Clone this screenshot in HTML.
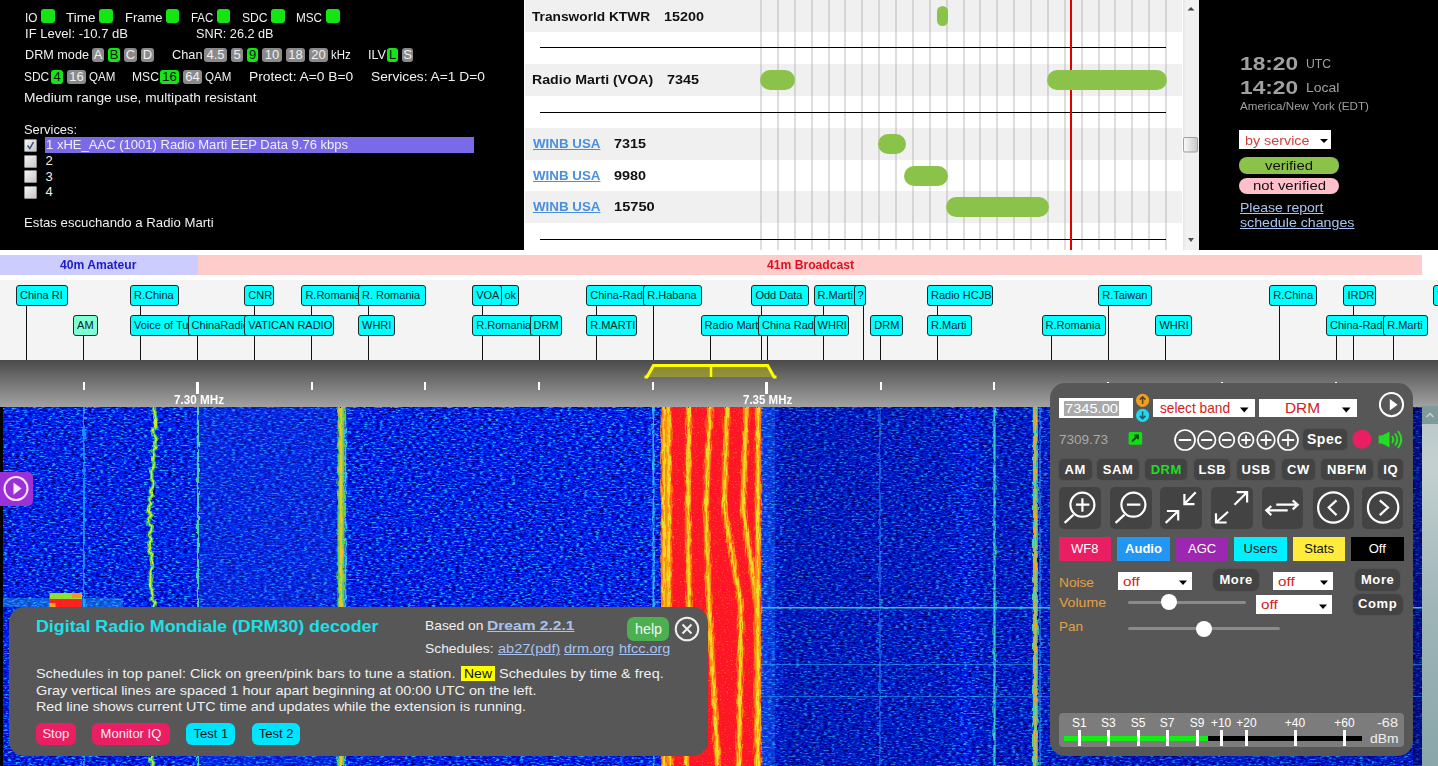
<!DOCTYPE html><html><head><meta charset="utf-8"><style>
*{margin:0;padding:0;box-sizing:border-box}
html,body{width:1438px;height:766px;overflow:hidden;background:#000;font-family:"Liberation Sans",sans-serif}
.t{position:absolute;white-space:nowrap;line-height:1;transform-origin:0 50%}
.r{position:absolute}
.bx{position:absolute;border-radius:3px;font-size:13px;line-height:14px;text-align:center;overflow:hidden}
.cb{position:absolute;width:13px;height:13px;background:linear-gradient(135deg,#f4f4f4,#c8c8c8);border:1px solid #8c8c8c;border-radius:1px}
.cb svg{position:absolute;left:-1px;top:-1px}
.lb{position:absolute;height:21px;border:1px solid #1a2a2a;border-radius:3px;font-size:11px;line-height:19px;padding-left:3px;color:#06262a;white-space:nowrap;overflow:hidden;box-sizing:content-box;height:19px}
.btn{position:absolute;border-radius:6px;font-size:13px;line-height:22px;text-align:center;white-space:nowrap}
.mb{position:absolute;background:#434343;border-radius:5px;font-size:13px;font-weight:bold;letter-spacing:0.6px;color:#fff;line-height:21px;text-align:center;white-space:nowrap;box-shadow:0 0 2px #4a4a4a}
.ib{position:absolute;background:#434343;border-radius:5px}
.ib svg{position:absolute;left:0;top:0}
.tb{position:absolute;font-size:13px;line-height:24px;text-align:center;white-space:nowrap}
.sm{position:absolute;width:40px;text-align:center;font-size:12px;line-height:14px;color:#fff}
</style></head><body><div class="r" style="left:0.0px;top:0.0px;width:524.0px;height:250.0px;background:#000"></div>
<div id="t1" class="t" style="left:25.0px;top:11.0px;font-size:13px;color:#f0f0f0;font-weight:normal;transform:scaleX(0.9101);">IO</div>
<div class="r" style="left:41.0px;top:9.0px;width:14.0px;height:14.0px;background:#14e614;border-radius:3px"></div>
<div id="t2" class="t" style="left:66.0px;top:11.0px;font-size:13px;color:#f0f0f0;font-weight:normal;transform:scaleX(1.0385);">Time</div>
<div class="r" style="left:99.0px;top:9.0px;width:14.0px;height:14.0px;background:#14e614;border-radius:3px"></div>
<div id="t3" class="t" style="left:124.5px;top:11.0px;font-size:13px;color:#f0f0f0;font-weight:normal;transform:scaleX(1.0010);">Frame</div>
<div class="r" style="left:165.6px;top:9.0px;width:13.6px;height:14.0px;background:#14e614;border-radius:3px"></div>
<div id="t4" class="t" style="left:191.2px;top:11.0px;font-size:13px;color:#f0f0f0;font-weight:normal;transform:scaleX(0.8815);">FAC</div>
<div class="r" style="left:217.0px;top:9.0px;width:13.4px;height:14.0px;background:#14e614;border-radius:3px"></div>
<div id="t5" class="t" style="left:241.9px;top:11.0px;font-size:13px;color:#f0f0f0;font-weight:normal;transform:scaleX(0.9325);">SDC</div>
<div class="r" style="left:271.0px;top:9.0px;width:13.8px;height:14.0px;background:#14e614;border-radius:3px"></div>
<div id="t6" class="t" style="left:296.4px;top:11.0px;font-size:13px;color:#f0f0f0;font-weight:normal;transform:scaleX(0.9034);">MSC</div>
<div class="r" style="left:326.0px;top:9.0px;width:14.0px;height:14.0px;background:#14e614;border-radius:3px"></div>
<div id="t7" class="t" style="left:25.0px;top:27.0px;font-size:13px;color:#f0f0f0;font-weight:normal;transform:scaleX(1.0037);">IF Level: -10.7 dB</div>
<div id="t8" class="t" style="left:196.0px;top:27.0px;font-size:13px;color:#f0f0f0;font-weight:normal;transform:scaleX(0.9761);">SNR: 26.2 dB</div>
<div id="t9" class="t" style="left:25.0px;top:48.0px;font-size:13px;color:#f0f0f0;font-weight:normal;transform:scaleX(0.9734);">DRM mode</div>
<div class="bx" style="left:92.0px;top:48.0px;width:12.0px;height:14.0px;background:#8a8a8a;color:#f0f0f0">A</div>
<div class="bx" style="left:108.0px;top:48.0px;width:12.0px;height:14.0px;background:#14e614;color:#111">B</div>
<div class="bx" style="left:124.0px;top:48.0px;width:13.0px;height:14.0px;background:#8a8a8a;color:#f0f0f0">C</div>
<div class="bx" style="left:141.0px;top:48.0px;width:13.0px;height:14.0px;background:#8a8a8a;color:#f0f0f0">D</div>
<div id="t10" class="t" style="left:171.5px;top:48.0px;font-size:13px;color:#f0f0f0;font-weight:normal;transform:scaleX(0.9814);">Chan</div>
<div class="bx" style="left:204.0px;top:48.0px;width:23.0px;height:14.0px;background:#8a8a8a;color:#f0f0f0">4.5</div>
<div class="bx" style="left:231.0px;top:48.0px;width:12.0px;height:14.0px;background:#8a8a8a;color:#f0f0f0">5</div>
<div class="bx" style="left:247.0px;top:48.0px;width:11.0px;height:14.0px;background:#14e614;color:#111">9</div>
<div class="bx" style="left:262.0px;top:48.0px;width:20.0px;height:14.0px;background:#8a8a8a;color:#f0f0f0">10</div>
<div class="bx" style="left:286.0px;top:48.0px;width:19.0px;height:14.0px;background:#8a8a8a;color:#f0f0f0">18</div>
<div class="bx" style="left:309.0px;top:48.0px;width:19.0px;height:14.0px;background:#8a8a8a;color:#f0f0f0">20</div>
<div id="t11" class="t" style="left:331.0px;top:48.0px;font-size:13px;color:#f0f0f0;font-weight:normal;transform:scaleX(0.8798);">kHz</div>
<div id="t12" class="t" style="left:368.0px;top:48.0px;font-size:13px;color:#f0f0f0;font-weight:normal;transform:scaleX(0.9697);">ILV</div>
<div class="bx" style="left:387.0px;top:48.0px;width:11.0px;height:14.0px;background:#14e614;color:#111">L</div>
<div class="bx" style="left:402.0px;top:48.0px;width:11.0px;height:14.0px;background:#8a8a8a;color:#f0f0f0">S</div>
<div id="t13" class="t" style="left:24.3px;top:70.0px;font-size:13px;color:#f0f0f0;font-weight:normal;transform:scaleX(0.9179);">SDC</div>
<div class="bx" style="left:51.0px;top:70.0px;width:12.0px;height:14.0px;background:#14e614;color:#111">4</div>
<div class="bx" style="left:67.0px;top:70.0px;width:19.0px;height:14.0px;background:#8a8a8a;color:#f0f0f0">16</div>
<div id="t14" class="t" style="left:88.7px;top:70.0px;font-size:13px;color:#f0f0f0;font-weight:normal;transform:scaleX(0.8878);">QAM</div>
<div id="t15" class="t" style="left:131.6px;top:70.0px;font-size:13px;color:#f0f0f0;font-weight:normal;transform:scaleX(0.9311);">MSC</div>
<div class="bx" style="left:160.0px;top:70.0px;width:19.0px;height:14.0px;background:#14e614;color:#111">16</div>
<div class="bx" style="left:183.0px;top:70.0px;width:19.0px;height:14.0px;background:#8a8a8a;color:#f0f0f0">64</div>
<div id="t16" class="t" style="left:204.6px;top:70.0px;font-size:13px;color:#f0f0f0;font-weight:normal;transform:scaleX(0.8911);">QAM</div>
<div id="t17" class="t" style="left:248.7px;top:70.0px;font-size:13px;color:#f0f0f0;font-weight:normal;transform:scaleX(1.0611);">Protect: A=0 B=0</div>
<div id="t18" class="t" style="left:370.6px;top:70.0px;font-size:13px;color:#f0f0f0;font-weight:normal;transform:scaleX(1.0578);">Services: A=1 D=0</div>
<div id="t19" class="t" style="left:24.3px;top:91.0px;font-size:13px;color:#f0f0f0;font-weight:normal;transform:scaleX(1.0549);">Medium range use, multipath resistant</div>
<div id="t20" class="t" style="left:24.3px;top:123.0px;font-size:13px;color:#f0f0f0;font-weight:normal;transform:scaleX(0.9931);">Services:</div>
<div class="r" style="left:45.0px;top:137.0px;width:429.0px;height:16.0px;background:#7b6ae8"></div>
<div class="cb" style="left:24px;top:139px"><svg width="13" height="13" viewBox="0 0 13 13"><path d="M3.5 6.5 L5.8 9.5 L9.5 3" stroke="#3a4a80" stroke-width="1.5" fill="none"/></svg></div>
<div class="cb" style="left:24px;top:155px"></div>
<div class="cb" style="left:24px;top:170px"></div>
<div class="cb" style="left:24px;top:186px"></div>
<div id="t21" class="t" style="left:45.5px;top:138.0px;font-size:13px;color:#f0f0f0;font-weight:normal;transform:scaleX(1.0034);">1 xHE_AAC (1001) Radio Marti EEP Data 9.76 kbps</div>
<div id="t22" class="t" style="left:45.5px;top:154.0px;font-size:13px;color:#f0f0f0;font-weight:normal;">2</div>
<div id="t23" class="t" style="left:45.5px;top:169.5px;font-size:13px;color:#f0f0f0;font-weight:normal;">3</div>
<div id="t24" class="t" style="left:45.5px;top:185.0px;font-size:13px;color:#f0f0f0;font-weight:normal;">4</div>
<div id="t25" class="t" style="left:24.3px;top:216.0px;font-size:13px;color:#f0f0f0;font-weight:normal;transform:scaleX(1.0136);">Estas escuchando a Radio Marti</div>
<div class="r" style="left:524.0px;top:0.0px;width:674.0px;height:250.0px;background:#fff"></div>
<div class="r" style="left:525.0px;top:0.0px;width:657.0px;height:32.0px;background:#f0f0f0"></div>
<div class="r" style="left:525.0px;top:64.0px;width:657.0px;height:32.0px;background:#f0f0f0"></div>
<div class="r" style="left:525.0px;top:128.0px;width:657.0px;height:31.5px;background:#f0f0f0"></div>
<div class="r" style="left:525.0px;top:191.0px;width:657.0px;height:32.0px;background:#f0f0f0"></div>
<div class="r" style="left:760.0px;top:0.0px;width:2.0px;height:250.0px;background:rgba(160,160,160,0.35)"></div>
<div class="r" style="left:776.9px;top:0.0px;width:2.0px;height:250.0px;background:rgba(160,160,160,0.35)"></div>
<div class="r" style="left:793.8px;top:0.0px;width:2.0px;height:250.0px;background:rgba(160,160,160,0.35)"></div>
<div class="r" style="left:810.6px;top:0.0px;width:2.0px;height:250.0px;background:rgba(160,160,160,0.35)"></div>
<div class="r" style="left:827.5px;top:0.0px;width:2.0px;height:250.0px;background:rgba(160,160,160,0.35)"></div>
<div class="r" style="left:844.4px;top:0.0px;width:2.0px;height:250.0px;background:rgba(160,160,160,0.35)"></div>
<div class="r" style="left:861.2px;top:0.0px;width:2.0px;height:250.0px;background:rgba(160,160,160,0.35)"></div>
<div class="r" style="left:878.1px;top:0.0px;width:2.0px;height:250.0px;background:rgba(160,160,160,0.35)"></div>
<div class="r" style="left:895.0px;top:0.0px;width:2.0px;height:250.0px;background:rgba(160,160,160,0.35)"></div>
<div class="r" style="left:911.9px;top:0.0px;width:2.0px;height:250.0px;background:rgba(160,160,160,0.35)"></div>
<div class="r" style="left:928.8px;top:0.0px;width:2.0px;height:250.0px;background:rgba(160,160,160,0.35)"></div>
<div class="r" style="left:945.6px;top:0.0px;width:2.0px;height:250.0px;background:rgba(160,160,160,0.35)"></div>
<div class="r" style="left:962.5px;top:0.0px;width:2.0px;height:250.0px;background:rgba(160,160,160,0.35)"></div>
<div class="r" style="left:979.4px;top:0.0px;width:2.0px;height:250.0px;background:rgba(160,160,160,0.35)"></div>
<div class="r" style="left:996.2px;top:0.0px;width:2.0px;height:250.0px;background:rgba(160,160,160,0.35)"></div>
<div class="r" style="left:1013.1px;top:0.0px;width:2.0px;height:250.0px;background:rgba(160,160,160,0.35)"></div>
<div class="r" style="left:1030.0px;top:0.0px;width:2.0px;height:250.0px;background:rgba(160,160,160,0.35)"></div>
<div class="r" style="left:1046.9px;top:0.0px;width:2.0px;height:250.0px;background:rgba(160,160,160,0.35)"></div>
<div class="r" style="left:1063.8px;top:0.0px;width:2.0px;height:250.0px;background:rgba(160,160,160,0.35)"></div>
<div class="r" style="left:1080.6px;top:0.0px;width:2.0px;height:250.0px;background:rgba(160,160,160,0.35)"></div>
<div class="r" style="left:1097.5px;top:0.0px;width:2.0px;height:250.0px;background:rgba(160,160,160,0.35)"></div>
<div class="r" style="left:1114.4px;top:0.0px;width:2.0px;height:250.0px;background:rgba(160,160,160,0.35)"></div>
<div class="r" style="left:1131.2px;top:0.0px;width:2.0px;height:250.0px;background:rgba(160,160,160,0.35)"></div>
<div class="r" style="left:1148.1px;top:0.0px;width:2.0px;height:250.0px;background:rgba(160,160,160,0.35)"></div>
<div class="r" style="left:1165.0px;top:0.0px;width:2.0px;height:250.0px;background:rgba(160,160,160,0.35)"></div>
<div class="r" style="left:540.0px;top:46.7px;width:626.0px;height:1.4px;background:#000"></div>
<div class="r" style="left:540.0px;top:111.7px;width:626.0px;height:1.4px;background:#000"></div>
<div class="r" style="left:540.0px;top:238.7px;width:626.0px;height:1.4px;background:#000"></div>
<div class="r" style="left:1070.0px;top:0.0px;width:2.0px;height:250.0px;background:#e00000"></div>
<div class="r" style="left:937.0px;top:5.9px;width:11.0px;height:20.0px;background:#8bc34a;border-radius:10px"></div>
<div class="r" style="left:760.0px;top:70.0px;width:35.4px;height:20.0px;background:#8bc34a;border-radius:10px"></div>
<div class="r" style="left:1046.8px;top:70.0px;width:120.1px;height:20.0px;background:#8bc34a;border-radius:10px"></div>
<div class="r" style="left:877.7px;top:133.7px;width:28.3px;height:20.0px;background:#8bc34a;border-radius:10px"></div>
<div class="r" style="left:903.7px;top:166.0px;width:44.3px;height:20.0px;background:#8bc34a;border-radius:10px"></div>
<div class="r" style="left:945.8px;top:196.8px;width:102.8px;height:20.0px;background:#8bc34a;border-radius:10px"></div>
<div id="t26" class="t" style="left:532.4px;top:9.5px;font-size:13px;color:#111;font-weight:bold;transform:scaleX(1.0549);">Transworld KTWR</div>
<div id="t27" class="t" style="left:664.0px;top:9.5px;font-size:13px;color:#111;font-weight:bold;transform:scaleX(1.1063);">15200</div>
<div id="t28" class="t" style="left:532.4px;top:73.0px;font-size:13px;color:#111;font-weight:bold;transform:scaleX(1.0896);">Radio Marti (VOA)</div>
<div id="t29" class="t" style="left:667.0px;top:73.0px;font-size:13px;color:#111;font-weight:bold;transform:scaleX(1.1064);">7345</div>
<div id="t30" class="t" style="left:533.4px;top:137.0px;font-size:13px;color:#4a8fdc;font-weight:bold;transform:scaleX(1.0256);text-decoration:underline;">WINB USA</div>
<div id="t31" class="t" style="left:614.0px;top:137.0px;font-size:13px;color:#111;font-weight:bold;transform:scaleX(1.1064);">7315</div>
<div id="t32" class="t" style="left:533.4px;top:169.0px;font-size:13px;color:#4a8fdc;font-weight:bold;transform:scaleX(1.0256);text-decoration:underline;">WINB USA</div>
<div id="t33" class="t" style="left:614.0px;top:169.0px;font-size:13px;color:#111;font-weight:bold;transform:scaleX(1.1064);">9980</div>
<div id="t34" class="t" style="left:533.4px;top:200.0px;font-size:13px;color:#4a8fdc;font-weight:bold;transform:scaleX(1.0256);text-decoration:underline;">WINB USA</div>
<div id="t35" class="t" style="left:614.0px;top:200.0px;font-size:13px;color:#111;font-weight:bold;transform:scaleX(1.1257);">15750</div>
<div class="r" style="left:1183.0px;top:0.0px;width:16.0px;height:250.0px;background:linear-gradient(90deg,#e4e4e4,#f2f2f2 3px,#efefef)"></div>
<svg class="r" style="left:1183px;top:0px" width="16" height="250"><path d="M4.5 10.5 L8 7 L11.5 10.5 Z" fill="#404040"/><path d="M5 238 L11 238 L8 242 Z" fill="#505050"/><defs><linearGradient id="th" x1="0" x2="1"><stop offset="0" stop-color="#fafafa"/><stop offset="1" stop-color="#c8c8c8"/></linearGradient></defs><rect x="0.5" y="137.5" width="14" height="14.5" rx="1.5" fill="url(#th)" stroke="#a0a0a0"/></svg>
<div class="r" style="left:1199.0px;top:0.0px;width:239.0px;height:250.0px;background:#000"></div>
<div id="t36" class="t" style="left:1239.6px;top:54.0px;font-size:19px;color:#a0a0a0;font-weight:bold;transform:scaleX(1.1952);">18:20</div>
<div id="t37" class="t" style="left:1305.6px;top:57.0px;font-size:13px;color:#a0a0a0;font-weight:normal;transform:scaleX(0.9394);">UTC</div>
<div id="t38" class="t" style="left:1239.6px;top:78.0px;font-size:19px;color:#a0a0a0;font-weight:bold;transform:scaleX(1.1952);">14:20</div>
<div id="t39" class="t" style="left:1305.6px;top:81.0px;font-size:13px;color:#a0a0a0;font-weight:normal;transform:scaleX(1.0747);">Local</div>
<div id="t40" class="t" style="left:1239.6px;top:100.5px;font-size:11px;color:#a0a0a0;font-weight:normal;transform:scaleX(1.0543);">America/New York (EDT)</div>
<div class="r" style="left:1239.0px;top:130.0px;width:92.0px;height:19.0px;background:#fff"></div>
<div id="t41" class="t" style="left:1244.5px;top:133.5px;font-size:13px;color:#d0433a;font-weight:normal;transform:scaleX(1.1020);">by service</div>
<svg class="r" style="left:1319.5px;top:137.5px" width="9" height="6"><path d="M0 1 L8 1 L4 5 Z" fill="#000"/></svg>
<div class="r" style="left:1239.0px;top:157.3px;width:100.0px;height:16.3px;background:#8bc34a;border-radius:8px"></div>
<div id="t42" class="t" style="left:1265.0px;top:159.0px;font-size:13px;color:#111;font-weight:normal;transform:scaleX(1.1450);">verified</div>
<div class="r" style="left:1239.0px;top:177.8px;width:100.0px;height:16.2px;background:#ffc0cb;border-radius:8px"></div>
<div id="t43" class="t" style="left:1252.5px;top:179.0px;font-size:13px;color:#111;font-weight:normal;transform:scaleX(1.1479);">not verified</div>
<div id="t44" class="t" style="left:1239.6px;top:201.0px;font-size:13px;color:#a8c4f0;font-weight:normal;transform:scaleX(1.0785);text-decoration:underline;">Please report</div>
<div id="t45" class="t" style="left:1239.6px;top:216.0px;font-size:13px;color:#a8c4f0;font-weight:normal;transform:scaleX(1.0915);text-decoration:underline;">schedule changes</div>
<div class="r" style="left:0.0px;top:250.0px;width:1438.0px;height:30.0px;background:#fff"></div>
<div class="r" style="left:0.0px;top:255.0px;width:198.0px;height:20.0px;background:#ccccff"></div>
<div class="r" style="left:198.0px;top:255.0px;width:1224.0px;height:20.0px;background:#ffcccc"></div>
<div id="t46" class="t" style="left:60.3px;top:259.0px;font-size:12px;color:#1c1cc8;font-weight:bold;transform:scaleX(1.0120);">40m Amateur</div>
<div id="t47" class="t" style="left:767.0px;top:259.0px;font-size:12px;color:#e01020;font-weight:bold;transform:scaleX(1.0111);">41m Broadcast</div>
<div class="r" style="left:0.0px;top:280.0px;width:1438.0px;height:80.0px;background:#f4f4f4"></div>
<div class="r" style="left:26.0px;top:306.0px;width:1.0px;height:54.0px;background:#111"></div>
<div class="r" style="left:139.5px;top:306.0px;width:1.0px;height:54.0px;background:#111"></div>
<div class="r" style="left:253.8px;top:306.0px;width:1.0px;height:54.0px;background:#111"></div>
<div class="r" style="left:310.9px;top:306.0px;width:1.0px;height:54.0px;background:#111"></div>
<div class="r" style="left:367.5px;top:306.0px;width:1.0px;height:54.0px;background:#111"></div>
<div class="r" style="left:481.8px;top:306.0px;width:1.0px;height:54.0px;background:#111"></div>
<div class="r" style="left:595.8px;top:306.0px;width:1.0px;height:54.0px;background:#111"></div>
<div class="r" style="left:652.8px;top:306.0px;width:1.0px;height:54.0px;background:#111"></div>
<div class="r" style="left:761.0px;top:306.0px;width:1.0px;height:54.0px;background:#111"></div>
<div class="r" style="left:822.9px;top:306.0px;width:1.0px;height:54.0px;background:#111"></div>
<div class="r" style="left:862.8px;top:306.0px;width:1.0px;height:54.0px;background:#111"></div>
<div class="r" style="left:936.5px;top:306.0px;width:1.0px;height:54.0px;background:#111"></div>
<div class="r" style="left:1108.1px;top:306.0px;width:1.0px;height:54.0px;background:#111"></div>
<div class="r" style="left:1278.8px;top:306.0px;width:1.0px;height:54.0px;background:#111"></div>
<div class="r" style="left:1352.5px;top:306.0px;width:1.0px;height:54.0px;background:#111"></div>
<div class="r" style="left:1442.5px;top:306.0px;width:1.0px;height:54.0px;background:#111"></div>
<div class="r" style="left:83.0px;top:336.0px;width:1.0px;height:24.0px;background:#111"></div>
<div class="r" style="left:139.5px;top:336.0px;width:1.0px;height:24.0px;background:#111"></div>
<div class="r" style="left:197.1px;top:336.0px;width:1.0px;height:24.0px;background:#111"></div>
<div class="r" style="left:253.8px;top:336.0px;width:1.0px;height:24.0px;background:#111"></div>
<div class="r" style="left:367.5px;top:336.0px;width:1.0px;height:24.0px;background:#111"></div>
<div class="r" style="left:481.8px;top:336.0px;width:1.0px;height:24.0px;background:#111"></div>
<div class="r" style="left:538.8px;top:336.0px;width:1.0px;height:24.0px;background:#111"></div>
<div class="r" style="left:595.8px;top:336.0px;width:1.0px;height:24.0px;background:#111"></div>
<div class="r" style="left:709.8px;top:336.0px;width:1.0px;height:24.0px;background:#111"></div>
<div class="r" style="left:766.9px;top:336.0px;width:1.0px;height:24.0px;background:#111"></div>
<div class="r" style="left:822.9px;top:336.0px;width:1.0px;height:24.0px;background:#111"></div>
<div class="r" style="left:880.2px;top:336.0px;width:1.0px;height:24.0px;background:#111"></div>
<div class="r" style="left:936.5px;top:336.0px;width:1.0px;height:24.0px;background:#111"></div>
<div class="r" style="left:1051.0px;top:336.0px;width:1.0px;height:24.0px;background:#111"></div>
<div class="r" style="left:1164.9px;top:336.0px;width:1.0px;height:24.0px;background:#111"></div>
<div class="r" style="left:1336.0px;top:336.0px;width:1.0px;height:24.0px;background:#111"></div>
<div class="r" style="left:1392.5px;top:336.0px;width:1.0px;height:24.0px;background:#111"></div>
<div class="lb" style="left:16.0px;top:285px;width:47.0px;background:#00ffff">China RI</div>
<div class="lb" style="left:130.0px;top:285px;width:43.6px;background:#00ffff">R.China</div>
<div class="lb" style="left:244.3px;top:285px;width:25.1px;background:#00ffff">CNR</div>
<div class="lb" style="left:301.4px;top:285px;width:63.6px;background:#00ffff">R.Romania</div>
<div class="lb" style="left:358.0px;top:285px;width:62.6px;background:#00ffff">R. Romania</div>
<div class="lb" style="left:472.0px;top:285px;width:43.0px;background:#00ffff;text-align:right;padding:0 2px 0 0">ok</div>
<div class="lb" style="left:472.2px;top:285px;width:25.2px;background:#00ffff">VOA</div>
<div class="lb" style="left:586.2px;top:285px;width:58.8px;background:#00ffff">China-Radio</div>
<div class="lb" style="left:643.2px;top:285px;width:54.1px;background:#00ffff">R.Habana</div>
<div class="lb" style="left:751.4px;top:285px;width:53.0px;background:#00ffff">Odd Data</div>
<div class="lb" style="left:813.6px;top:285px;width:41.4px;background:#00ffff">R.Marti</div>
<div class="lb" style="left:853.6px;top:285px;width:7.5px;background:#00ffff">?</div>
<div class="lb" style="left:927.0px;top:285px;width:61.0px;background:#00ffff">Radio HCJB</div>
<div class="lb" style="left:1098.2px;top:285px;width:49.1px;background:#00ffff">R.Taiwan</div>
<div class="lb" style="left:1269.3px;top:285px;width:43.1px;background:#00ffff">R.China</div>
<div class="lb" style="left:1343.4px;top:285px;width:27.9px;background:#00ffff">IRDR</div>
<div class="lb" style="left:1433.4px;top:285px;width:41.6px;background:#00ffff">VOA</div>
<div class="lb" style="left:73.1px;top:315px;width:19.7px;background:#7fffd4">AM</div>
<div class="lb" style="left:130.0px;top:315px;width:65.0px;background:#00ffff">Voice of Turkey</div>
<div class="lb" style="left:187.6px;top:315px;width:57.4px;background:#00ffff">ChinaRadio</div>
<div class="lb" style="left:244.3px;top:315px;width:85.2px;background:#00ffff">VATICAN RADIO</div>
<div class="lb" style="left:358.0px;top:315px;width:31.5px;background:#00ffff">WHRI</div>
<div class="lb" style="left:472.2px;top:315px;width:62.8px;background:#00ffff">R.Romania</div>
<div class="lb" style="left:529.5px;top:315px;width:27.0px;background:#00ffff">DRM</div>
<div class="lb" style="left:586.2px;top:315px;width:45.4px;background:#00ffff">R.MARTI</div>
<div class="lb" style="left:700.6px;top:315px;width:64.4px;background:#00ffff">Radio Marti</div>
<div class="lb" style="left:758.0px;top:315px;width:57.0px;background:#00ffff">China Radio</div>
<div class="lb" style="left:813.6px;top:315px;width:30.8px;background:#00ffff">WHRI</div>
<div class="lb" style="left:870.3px;top:315px;width:27.3px;background:#00ffff">DRM</div>
<div class="lb" style="left:927.0px;top:315px;width:40.2px;background:#00ffff">R.Marti</div>
<div class="lb" style="left:1041.5px;top:315px;width:59.0px;background:#00ffff">R.Romania</div>
<div class="lb" style="left:1155.4px;top:315px;width:31.3px;background:#00ffff">WHRI</div>
<div class="lb" style="left:1326.0px;top:315px;width:59.0px;background:#00ffff">China-Radio</div>
<div class="lb" style="left:1383.2px;top:315px;width:40.0px;background:#00ffff">R.Marti</div>
<div class="r" style="left:0.0px;top:360.0px;width:1438.0px;height:47.0px;background:linear-gradient(#4a4a4a,#a2a2a2)"></div>
<svg class="r" style="left:640px;top:360px" width="145" height="25"><path d="M13.5 5 L127.7 5 L136 17 L13.5 17 L4.5 17 Z" fill="rgba(200,200,0,0.45)" stroke="none"/><path d="M4.5 17 L7 17 L13.5 5.5 L127.7 5.5 L134 17 L136.5 17" stroke="#ffff00" stroke-width="3" fill="none"/><path d="M71 5 L71 17" stroke="#ffff00" stroke-width="2.5"/></svg>
<div class="r" style="left:83.0px;top:382.0px;width:2.0px;height:8.0px;background:#fff"></div>
<div class="r" style="left:196.3px;top:382.0px;width:3.0px;height:11.5px;background:#fff"></div>
<div class="r" style="left:310.6px;top:382.0px;width:2.0px;height:8.0px;background:#fff"></div>
<div class="r" style="left:424.4px;top:382.0px;width:2.0px;height:8.0px;background:#fff"></div>
<div class="r" style="left:538.2px;top:382.0px;width:2.0px;height:8.0px;background:#fff"></div>
<div class="r" style="left:652.0px;top:382.0px;width:2.0px;height:8.0px;background:#fff"></div>
<div class="r" style="left:765.3px;top:382.0px;width:3.0px;height:11.5px;background:#fff"></div>
<div class="r" style="left:879.6px;top:382.0px;width:2.0px;height:8.0px;background:#fff"></div>
<div class="r" style="left:993.4px;top:382.0px;width:2.0px;height:8.0px;background:#fff"></div>
<div class="r" style="left:1107.2px;top:382.0px;width:2.0px;height:8.0px;background:#fff"></div>
<div class="r" style="left:1221.0px;top:382.0px;width:2.0px;height:8.0px;background:#fff"></div>
<div class="r" style="left:1334.8px;top:382.0px;width:2.0px;height:8.0px;background:#fff"></div>
<div id="t48" class="t" style="left:173.6px;top:394.0px;font-size:12px;color:#fff;font-weight:bold;transform:scaleX(0.9755);">7.30 MHz</div>
<div id="t49" class="t" style="left:743.3px;top:394.0px;font-size:12px;color:#fff;font-weight:bold;transform:scaleX(0.9580);">7.35 MHz</div>
<div class="r" id="wf" style="left:0;top:407px;width:1422px;height:359px"></div>
<svg class="r" style="left:0;top:407px" width="1422" height="359"><defs><filter id="nz" x="0" y="0" width="100%" height="100%" color-interpolation-filters="sRGB"><feTurbulence type="fractalNoise" baseFrequency="0.25 0.65" numOctaves="2" seed="3"/><feColorMatrix type="matrix" values="0 0 0 0 0  2.000 0 0 0 -0.500  0 0 0 0 0  0 0 0 0 1"/><feColorMatrix type="matrix" values="0 1 0 0 0  0 1 0 0 0  0 1 0 0 0  0 0 0 0 1"/><feComponentTransfer><feFuncR type="table" tableValues="0 0 0 0 0.2"/><feFuncG type="table" tableValues="0 0.03 0.11 0.3 0.65"/><feFuncB type="table" tableValues="0.4 0.8 0.92 1 1"/></feComponentTransfer></filter></defs><rect x="0" y="0" width="1422" height="359" fill="#0b2ad2"/><rect x="0" y="0" width="1422" height="359" filter="url(#nz)"/><rect x="200" y="0" width="140" height="359" fill="#1a48e0" opacity="0.25"/><defs><linearGradient id="dk" x1="0" x2="1" y1="0" y2="0"><stop offset="0" stop-color="#000850" stop-opacity="0"/><stop offset="0.04" stop-color="#000850" stop-opacity="0.28"/><stop offset="0.28" stop-color="#000850" stop-opacity="0.22"/><stop offset="0.31" stop-color="#000850" stop-opacity="0.05"/><stop offset="0.34" stop-color="#000850" stop-opacity="0.22"/><stop offset="1" stop-color="#000850" stop-opacity="0.22"/></linearGradient></defs><rect x="761" y="0" width="661" height="359" fill="url(#dk)"/><rect x="761" y="0" width="14" height="359" fill="#30a0ff" opacity="0.25"/><rect x="1413" y="0" width="9" height="359" fill="#000030" opacity="0.4"/><defs><filter id="rag2" x="-50%" y="0" width="200%" height="100%"><feTurbulence type="fractalNoise" baseFrequency="0.5 0.12" numOctaves="2" seed="11"/><feDisplacementMap in="SourceGraphic" scale="3.5" xChannelSelector="R" yChannelSelector="G"/></filter></defs><g filter="url(#rag2)"><rect x="83.2" y="0" width="1.5" height="359" fill="#30c0ff" opacity="0.85"/><polyline points="153.7,0 154.5,4 155.0,8 155.9,12 155.2,16 156.2,20 152.3,24 154.3,28 156.5,32 155.1,36 156.2,40 152.6,44 154.0,48 152.9,52 153.9,56 153.8,60 151.1,64 151.7,68 151.6,72 154.1,76 153.1,80 150.1,84 152.6,88 149.4,92 151.2,96 148.8,100 148.0,104 151.6,108 148.5,112 148.4,116 151.7,120 151.1,124 148.6,128 151.6,132 149.8,136 150.5,140 148.6,144 152.1,148 151.2,152 152.7,156 152.6,160 150.3,164 150.9,168 150.4,172 150.6,176 150.6,180 152.0,184 153.6,188 151.3,192 154.5,196 153.2,200 153.3,204 155.7,208 154.3,212 153.7,216 154.4,220 155.4,224 152.5,228 156.4,232 152.1,236 155.1,240 155.3,244 151.4,248 154.5,252 152.4,256 153.0,260 150.2,264 150.0,268 150.2,272 153.3,276 149.7,280 151.8,284 152.3,288 152.1,292 149.3,296 149.2,300 149.8,304 150.8,308 147.8,312 150.6,316 150.8,320 151.2,324 147.7,328 151.9,332 148.3,336 149.6,340 151.1,344 152.7,348 150.5,352 153.4,356 152.0,360" stroke="#40d860" stroke-width="4" fill="none" opacity="0.8"/><polyline points="153.7,0 154.5,4 155.0,8 155.9,12 155.2,16 156.2,20 152.3,24 154.3,28 156.5,32 155.1,36 156.2,40 152.6,44 154.0,48 152.9,52 153.9,56 153.8,60 151.1,64 151.7,68 151.6,72 154.1,76 153.1,80 150.1,84 152.6,88 149.4,92 151.2,96 148.8,100 148.0,104 151.6,108 148.5,112 148.4,116 151.7,120 151.1,124 148.6,128 151.6,132 149.8,136 150.5,140 148.6,144 152.1,148 151.2,152 152.7,156 152.6,160 150.3,164 150.9,168 150.4,172 150.6,176 150.6,180 152.0,184 153.6,188 151.3,192 154.5,196 153.2,200 153.3,204 155.7,208 154.3,212 153.7,216 154.4,220 155.4,224 152.5,228 156.4,232 152.1,236 155.1,240 155.3,244 151.4,248 154.5,252 152.4,256 153.0,260 150.2,264 150.0,268 150.2,272 153.3,276 149.7,280 151.8,284 152.3,288 152.1,292 149.3,296 149.2,300 149.8,304 150.8,308 147.8,312 150.6,316 150.8,320 151.2,324 147.7,328 151.9,332 148.3,336 149.6,340 151.1,344 152.7,348 150.5,352 153.4,356 152.0,360" stroke="#c8f020" stroke-width="1.6" fill="none"/><rect x="196.9" y="0" width="2.2" height="359" fill="#50e0a0" opacity="0.90"/><rect x="337.5" y="0" width="7.0" height="359" fill="#60e050" opacity="0.90"/><rect x="339.5" y="0" width="3.0" height="359" fill="#ffc020" opacity="0.90"/><rect x="344.8" y="0" width="1.5" height="359" fill="#40e0ff" opacity="0.80"/><rect x="652.5" y="0" width="2.0" height="359" fill="#40d0ff" opacity="0.80"/><rect x="879.2" y="0" width="1.5" height="359" fill="#30a0ff" opacity="0.60"/><rect x="993.4" y="0" width="2.2" height="359" fill="#40e0c0" opacity="0.90"/><rect x="1032.8" y="0" width="5.0" height="359" fill="#50e0a0" opacity="0.90"/><rect x="1034.3" y="0" width="2.0" height="359" fill="#ffa020" opacity="0.95"/><rect x="1039.4" y="0" width="1.2" height="359" fill="#40c0ff" opacity="0.70"/></g><defs><filter id="rag" x="-10%" y="0" width="120%" height="100%"><feTurbulence type="fractalNoise" baseFrequency="0.6 0.08" numOctaves="2" seed="7"/><feDisplacementMap in="SourceGraphic" scale="5" xChannelSelector="R" yChannelSelector="G"/></filter></defs><rect x="661" y="0" width="100" height="359" fill="#ff1626"/><g filter="url(#rag)"><polyline points="664.0,0.0 664.0,359.0" stroke="#ff6a10" stroke-width="8" fill="none" opacity="0.3"/><polyline points="664.0,0.0 664.0,359.0" stroke="#ff9a10" stroke-width="5.5" fill="none" opacity="0.85"/><polyline points="664.0,0.0 664.0,359.0" stroke="#e8f030" stroke-width="2.4" fill="none" opacity="0.8"/><polyline points="668.5,0.0 669.0,120.0 668.0,250.0 670.0,359.0" stroke="#ff6a10" stroke-width="8" fill="none" opacity="0.3"/><polyline points="668.5,0.0 669.0,120.0 668.0,250.0 670.0,359.0" stroke="#ff9a10" stroke-width="5.5" fill="none" opacity="0.85"/><polyline points="668.5,0.0 669.0,120.0 668.0,250.0 670.0,359.0" stroke="#e8f030" stroke-width="2.4" fill="none" opacity="0.8"/><polyline points="689.0,0.0 688.0,100.0 689.0,200.0 686.0,359.0" stroke="#ff6a10" stroke-width="8" fill="none" opacity="0.3"/><polyline points="689.0,0.0 688.0,100.0 689.0,200.0 686.0,359.0" stroke="#ff9a10" stroke-width="5.5" fill="none" opacity="0.85"/><polyline points="689.0,0.0 688.0,100.0 689.0,200.0 686.0,359.0" stroke="#e8f030" stroke-width="2.4" fill="none" opacity="0.8"/><polyline points="710.0,0.0 706.0,100.0 709.0,200.0 718.0,359.0" stroke="#ff6a10" stroke-width="8" fill="none" opacity="0.3"/><polyline points="710.0,0.0 706.0,100.0 709.0,200.0 718.0,359.0" stroke="#ff9a10" stroke-width="5.5" fill="none" opacity="0.85"/><polyline points="710.0,0.0 706.0,100.0 709.0,200.0 718.0,359.0" stroke="#e8f030" stroke-width="2.4" fill="none" opacity="0.8"/><polyline points="727.0,0.0 724.0,100.0 741.0,200.0 739.0,359.0" stroke="#ff6a10" stroke-width="8" fill="none" opacity="0.3"/><polyline points="727.0,0.0 724.0,100.0 741.0,200.0 739.0,359.0" stroke="#ff9a10" stroke-width="5.5" fill="none" opacity="0.85"/><polyline points="727.0,0.0 724.0,100.0 741.0,200.0 739.0,359.0" stroke="#e8f030" stroke-width="2.4" fill="none" opacity="0.8"/><polyline points="746.5,0.0 743.0,100.0 757.0,200.0 757.0,359.0" stroke="#ff6a10" stroke-width="8" fill="none" opacity="0.3"/><polyline points="746.5,0.0 743.0,100.0 757.0,200.0 757.0,359.0" stroke="#ff9a10" stroke-width="5.5" fill="none" opacity="0.85"/><polyline points="746.5,0.0 743.0,100.0 757.0,200.0 757.0,359.0" stroke="#e8f030" stroke-width="2.4" fill="none" opacity="0.8"/><polyline points="758.0,0.0 758.0,359.0" stroke="#ff6a10" stroke-width="8" fill="none" opacity="0.3"/><polyline points="758.0,0.0 758.0,359.0" stroke="#ff9a10" stroke-width="5.5" fill="none" opacity="0.85"/><polyline points="758.0,0.0 758.0,359.0" stroke="#e8f030" stroke-width="2.4" fill="none" opacity="0.8"/></g><defs><filter id="bn" x="0" y="0" width="100%" height="100%" color-interpolation-filters="sRGB"><feTurbulence type="fractalNoise" baseFrequency="0.45 0.9" numOctaves="2" seed="9"/><feColorMatrix type="matrix" values="0 0 0 0 1  0 0 0 0 0.62  0 0 0 0 0.1  5 0 0 0 -3"/></filter></defs><rect x="661" y="0" width="100" height="359" filter="url(#bn)" opacity="0.5"/><rect x="761" y="200" width="661" height="1.5" fill="#40e0d0" opacity="0.85"/><rect x="761" y="257" width="661" height="1" fill="#40c0ff" opacity="0.5"/><rect x="761" y="289" width="661" height="1" fill="#40c0ff" opacity="0.45"/><rect x="3" y="191" width="120" height="9" fill="#30d0e0" opacity="0.35"/><rect x="49.5" y="186" width="32.5" height="7" fill="#90e030"/><rect x="72" y="186" width="10" height="5" fill="#ff9020"/><rect x="49.5" y="192" width="32.5" height="8" fill="#ff2020"/><rect x="49.5" y="196" width="6" height="4" fill="#ffa020"/></svg>
<div class="r" style="left:0.0px;top:407.0px;width:3.0px;height:359.0px;background:#000"></div>
<div class="r" style="left:1422.0px;top:406.0px;width:16.0px;height:360.0px;background:linear-gradient(#b8c6c8 0px,#c4d0d0 60px,#9fb5b8 200px,#8aa6aa 359px)"></div>
<div class="r" style="left:1422.0px;top:406.0px;width:16.0px;height:18.0px;background:#7f9a9b"></div>
<svg class="r" style="left:1422px;top:406px" width="16" height="18"><path d="M4.5 11 L8 7.5 L11.5 11" stroke="#c8d0d0" stroke-width="1.5" fill="none"/></svg>
<div class="r" style="left:0;top:472px;width:33px;height:34px;background:#9b30d8;border-radius:0 5px 5px 0"></div>
<svg class="r" style="left:0;top:472px" width="33" height="34"><circle cx="16" cy="16.6" r="11.5" stroke="#ffe8ff" stroke-width="2" fill="none"/><path d="M13.5 10.5 L21.5 16.6 L13.5 22.7 Z" fill="#ffe8ff"/></svg>
<div class="r" style="left:9.0px;top:607.0px;width:699.2px;height:149.0px;background:#575757;border-radius:15px"></div>
<div id="t50" class="t" style="left:35.6px;top:618.5px;font-size:16px;color:#1ee0e8;font-weight:bold;transform:scaleX(1.1132);">Digital Radio Mondiale (DRM30) decoder</div>
<div id="t51" class="t" style="left:424.5px;top:619.0px;font-size:13px;color:#f0f0f0;font-weight:normal;transform:scaleX(1.0648);">Based on</div>
<div id="t52" class="t" style="left:487.2px;top:619.0px;font-size:13px;color:#a8c4f0;font-weight:bold;transform:scaleX(1.1986);text-decoration:underline;">Dream 2.2.1</div>
<div id="t53" class="t" style="left:424.5px;top:642.4px;font-size:13px;color:#f0f0f0;font-weight:normal;transform:scaleX(1.0649);">Schedules:</div>
<div id="t54" class="t" style="left:497.5px;top:642.4px;font-size:13px;color:#a8c4f0;font-weight:normal;transform:scaleX(1.1194);text-decoration:underline;">ab27(pdf)</div>
<div id="t55" class="t" style="left:564.2px;top:642.4px;font-size:13px;color:#a8c4f0;font-weight:normal;transform:scaleX(1.1184);text-decoration:underline;">drm.org</div>
<div id="t56" class="t" style="left:619.2px;top:642.4px;font-size:13px;color:#a8c4f0;font-weight:normal;transform:scaleX(1.1070);text-decoration:underline;">hfcc.org</div>
<div class="r" style="left:627.0px;top:617.4px;width:41.8px;height:23.8px;background:#4caf50;border-radius:7px"></div>
<div id="t57" class="t" style="left:634.5px;top:622.0px;font-size:14px;color:#f4f4f4;font-weight:normal;transform:scaleX(1.0201);">help</div>
<svg class="r" style="left:673px;top:615px" width="28" height="28"><circle cx="14" cy="14" r="11.3" stroke="#f0f0f0" stroke-width="2" fill="none"/><path d="M9.5 9.5 L18.5 18.5 M18.5 9.5 L9.5 18.5" stroke="#f0f0f0" stroke-width="2"/></svg>
<div id="t58" class="t" style="left:35.6px;top:667.0px;font-size:13px;color:#f0f0f0;font-weight:normal;transform:scaleX(1.1096);">Schedules in top panel: Click on green/pink bars to tune a station.</div>
<div class="r" style="left:460.7px;top:666.0px;width:34.5px;height:15.2px;background:#ffff00"></div>
<div id="t59" class="t" style="left:464.0px;top:667.0px;font-size:13px;color:#111;font-weight:normal;transform:scaleX(1.0763);">New</div>
<div id="t60" class="t" style="left:499.0px;top:667.0px;font-size:13px;color:#f0f0f0;font-weight:normal;transform:scaleX(1.1118);">Schedules by time &amp; freq.</div>
<div id="t61" class="t" style="left:35.6px;top:684.3px;font-size:13px;color:#f0f0f0;font-weight:normal;transform:scaleX(1.1119);">Gray vertical lines are spaced 1 hour apart beginning at 00:00 UTC on the left.</div>
<div id="t62" class="t" style="left:35.6px;top:699.7px;font-size:13px;color:#f0f0f0;font-weight:normal;transform:scaleX(1.1046);">Red line shows current UTC time and updates while the extension is running.</div>
<div class="btn" style="left:35.6px;top:723px;width:40.4px;height:22px;background:#e91e63;color:#f0f0f0">Stop</div>
<div class="btn" style="left:91.6px;top:723px;width:78.7px;height:22px;background:#e91e63;color:#f0f0f0">Monitor IQ</div>
<div class="btn" style="left:186.3px;top:723px;width:49.1px;height:22px;background:#00e5ff;color:#111">Test 1</div>
<div class="btn" style="left:251.9px;top:723px;width:48.6px;height:22px;background:#00e5ff;color:#111">Test 2</div>
<div class="r" style="left:1049.5px;top:383.0px;width:363.9px;height:373.4px;background:#575757;border-radius:15px"></div>
<div class="r" style="left:1059.0px;top:398.0px;width:73.8px;height:19.8px;background:#fff"></div>
<div class="r" style="left:1064.0px;top:400.7px;width:55.0px;height:15.0px;background:#a9a9a9"></div>
<div id="t63" class="t" style="left:1065.0px;top:401.6px;font-size:13.5px;color:#fff;font-weight:normal;transform:scaleX(1.0858);">7345.00</div>
<svg class="r" style="left:1135px;top:392px" width="16" height="32"><circle cx="7.6" cy="8.3" r="6.6" fill="#f0a020"/><path d="M7.6 12 L7.6 5 M4.8 7.6 L7.6 4.8 L10.4 7.6" stroke="#5a4020" stroke-width="1.5" fill="none"/><circle cx="7.6" cy="23.3" r="6.6" fill="#20d8f0"/><path d="M7.6 19.5 L7.6 26.5 M4.8 23.9 L7.6 26.7 L10.4 23.9" stroke="#205a60" stroke-width="1.5" fill="none"/></svg>
<div class="r" style="left:1153.0px;top:399.3px;width:101.5px;height:17.4px;background:#fff"></div>
<div id="t64" class="t" style="left:1160.0px;top:399.5px;font-size:15px;color:#d42020;font-weight:normal;transform:scaleX(0.9122);">select band</div>
<svg class="r" style="left:1239.5px;top:407.0px" width="9" height="6"><path d="M0 0.5 L8.5 0.5 L4.25 5.5 Z" fill="#000"/></svg>
<div class="r" style="left:1258.7px;top:399.0px;width:98.2px;height:18.0px;background:#fff"></div>
<div id="t65" class="t" style="left:1285.0px;top:399.5px;font-size:15px;color:#d42020;font-weight:normal;transform:scaleX(1.0242);">DRM</div>
<svg class="r" style="left:1341.9px;top:407.0px" width="9" height="6"><path d="M0 0.5 L8.5 0.5 L4.25 5.5 Z" fill="#000"/></svg>
<svg class="r" style="left:1377px;top:390px" width="30" height="30"><circle cx="14.5" cy="14.6" r="11.6" stroke="#fff" stroke-width="2" fill="none"/><path d="M12.8 9 L20.6 14.8 L12.8 20.6 Z" fill="#fff"/></svg>
<div id="t66" class="t" style="left:1059.0px;top:433.0px;font-size:13px;color:#aaaaaa;font-weight:normal;transform:scaleX(1.0426);">7309.73</div>
<svg class="r" style="left:1128px;top:432px" width="15" height="14"><rect x="0.6" y="0" width="13.6" height="12.8" rx="1.5" fill="#11dd11"/><path d="M4 9.5 L10 3.5 M6.3 3.5 L10 3.5 L10 7.2" stroke="#114411" stroke-width="1.8" fill="none"/></svg>
<svg class="r" style="left:1170px;top:425px" width="130" height="30"><circle cx="15.0" cy="15" r="10.0" stroke="#fff" stroke-width="1.7" fill="none"/><path d="M8.8 15 L21.2 15" stroke="#fff" stroke-width="2"/><circle cx="36.7" cy="15" r="8.8" stroke="#fff" stroke-width="1.7" fill="none"/><path d="M31.2 15 L42.2 15" stroke="#fff" stroke-width="2"/><circle cx="56.8" cy="15" r="7.5" stroke="#fff" stroke-width="1.7" fill="none"/><path d="M52.1 15 L61.4 15" stroke="#fff" stroke-width="2"/><circle cx="76.0" cy="15" r="7.5" stroke="#fff" stroke-width="1.7" fill="none"/><path d="M71.3 15 L80.7 15" stroke="#fff" stroke-width="2"/><path d="M76.0 10.3 L76.0 19.6" stroke="#fff" stroke-width="1.7"/><circle cx="96.0" cy="15" r="8.8" stroke="#fff" stroke-width="1.7" fill="none"/><path d="M90.5 15 L101.5 15" stroke="#fff" stroke-width="2"/><path d="M96.0 9.5 L96.0 20.5" stroke="#fff" stroke-width="1.7"/><circle cx="118.0" cy="15" r="10.0" stroke="#fff" stroke-width="1.7" fill="none"/><path d="M111.8 15 L124.2 15" stroke="#fff" stroke-width="2"/><path d="M118.0 8.8 L118.0 21.2" stroke="#fff" stroke-width="1.7"/></svg>
<div class="mb" style="left:1302.7px;top:428.7px;width:44.3px;height:21.3px;font-size:14px;line-height:21px">Spec</div>
<svg class="r" style="left:1350px;top:428px" width="60" height="24"><circle cx="12" cy="11.2" r="9.5" fill="#e91e63"/><path d="M28.7 7.5 L32 7.5 L39.5 3.7 L39.5 19.5 L32 15.5 L28.7 15.5 Z" fill="#22dd22"/><path d="M42 8 Q44.5 11.5 42 15 M45 5.5 Q49.5 11.5 45 17.5 M48 3 Q54.5 11.5 48 20" stroke="#22dd22" stroke-width="2" fill="none"/></svg>
<div class="mb" style="left:1058.8px;top:459.2px;width:33.0px;height:21px;color:#fff">AM</div>
<div class="mb" style="left:1097.3px;top:459.2px;width:41.5px;height:21px;color:#fff">SAM</div>
<div class="mb" style="left:1145.2px;top:459.2px;width:42.3px;height:21px;color:#22dd22">DRM</div>
<div class="mb" style="left:1194.2px;top:459.2px;width:36.2px;height:21px;color:#fff">LSB</div>
<div class="mb" style="left:1237.0px;top:459.2px;width:38.3px;height:21px;color:#fff">USB</div>
<div class="mb" style="left:1282.2px;top:459.2px;width:32.4px;height:21px;color:#fff">CW</div>
<div class="mb" style="left:1321.0px;top:459.2px;width:52.0px;height:21px;color:#fff">NBFM</div>
<div class="mb" style="left:1378.2px;top:459.2px;width:25.2px;height:21px;color:#fff">IQ</div>
<div class="ib" style="left:1059.4px;top:487.3px;width:41.3px;height:41.3px"><svg width="42" height="42"><circle cx="23.4" cy="17.7" r="12" stroke="#fff" stroke-width="2.2" fill="none"/><path d="M5.6 35.9 L14.6 27.6 M16.9 17.7 L30.4 17.7 M23.4 11.2 L23.4 24.7" stroke="#fff" stroke-width="2.2" fill="none"/></svg></div>
<div class="ib" style="left:1110.0px;top:487.3px;width:41.5px;height:41.3px"><svg width="42" height="42"><circle cx="23.4" cy="17.7" r="12" stroke="#fff" stroke-width="2.2" fill="none"/><path d="M5.6 35.9 L14.6 27.6 M16.9 17.7 L30.4 17.7" stroke="#fff" stroke-width="2.2" fill="none"/></svg></div>
<div class="ib" style="left:1160.1px;top:487.3px;width:41.6px;height:41.3px"><svg width="42" height="42"><path d="M35.7 5.2 L24.4 17.1 M24.4 7.1 L24.4 17.1 L34.5 17.1 M5.7 35.9 L18.2 24 M6.9 24 L18.2 24 L18.2 33.4" stroke="#fff" stroke-width="2.2" fill="none"/></svg></div>
<div class="ib" style="left:1211.4px;top:487.3px;width:41.4px;height:41.3px"><svg width="42" height="42"><path d="M23.5 17.7 L36.1 5.2 M25.7 5.2 L36.1 5.2 L36.1 15.5 M17.1 24.7 L5 35.5 M5 26.2 L5 35.5 L15.7 35.5" stroke="#fff" stroke-width="2.2" fill="none"/></svg></div>
<div class="ib" style="left:1262.0px;top:487.3px;width:40.6px;height:41.3px"><svg width="42" height="42"><path d="M14.3 17.7 L35.7 17.7 M30.7 13.4 L35.7 17.7 L30.7 22.4 M25.7 23.3 L4.3 23.3 M9.3 19.1 L4.3 23.3 L9.3 28.1" stroke="#fff" stroke-width="2.2" fill="none"/></svg></div>
<div class="ib" style="left:1312.6px;top:487.3px;width:41.4px;height:41.3px"><svg width="42" height="42"><circle cx="20.3" cy="20.5" r="15.2" stroke="#fff" stroke-width="2.2" fill="none"/><path d="M23.5 13.4 L15.7 20.5 L23.5 28.1" stroke="#fff" stroke-width="2.2" fill="none"/></svg></div>
<div class="ib" style="left:1361.8px;top:487.3px;width:41.3px;height:41.3px"><svg width="42" height="42"><circle cx="21.1" cy="20.5" r="15.2" stroke="#fff" stroke-width="2.2" fill="none"/><path d="M17.8 13.4 L26 20.5 L17.8 28.1" stroke="#fff" stroke-width="2.2" fill="none"/></svg></div>
<div class="tb" style="left:1058.5px;top:536.8px;width:52.4px;height:24px;background:#e91e63;color:#fff;font-weight:normal">WF8</div>
<div class="tb" style="left:1117.0px;top:536.8px;width:53.0px;height:24px;background:#2196f3;color:#fff;font-weight:bold">Audio</div>
<div class="tb" style="left:1176.2px;top:536.8px;width:51.8px;height:24px;background:#9c27b0;color:#fff;font-weight:normal">AGC</div>
<div class="tb" style="left:1234.0px;top:536.8px;width:53.0px;height:24px;background:#00f0ff;color:#111;font-weight:normal">Users</div>
<div class="tb" style="left:1293.2px;top:536.8px;width:51.8px;height:24px;background:#ffeb3b;color:#111;font-weight:normal">Stats</div>
<div class="tb" style="left:1351.0px;top:536.8px;width:52.5px;height:24px;background:#000;color:#fff;font-weight:normal">Off</div>
<div id="t67" class="t" style="left:1059.0px;top:576.0px;font-size:13px;color:#e8a040;font-weight:normal;transform:scaleX(1.0526);">Noise</div>
<div id="t68" class="t" style="left:1059.0px;top:596.0px;font-size:13px;color:#e8a040;font-weight:normal;transform:scaleX(1.0836);">Volume</div>
<div id="t69" class="t" style="left:1059.0px;top:620.0px;font-size:13px;color:#e8a040;font-weight:normal;transform:scaleX(1.0371);">Pan</div>
<div class="r" style="left:1118.0px;top:571.6px;width:73.6px;height:18.4px;background:#fff"></div>
<div id="t70" class="t" style="left:1122.6px;top:574.5px;font-size:13px;color:#d42020;font-weight:normal;transform:scaleX(1.1675);">off</div>
<svg class="r" style="left:1178.6px;top:579.8px" width="9" height="6"><path d="M0 0.5 L8 0.5 L4 5 Z" fill="#000"/></svg>
<div class="r" style="left:1273.2px;top:571.6px;width:59.5px;height:18.4px;background:#fff"></div>
<div id="t71" class="t" style="left:1277.8px;top:574.5px;font-size:13px;color:#d42020;font-weight:normal;transform:scaleX(1.1675);">off</div>
<svg class="r" style="left:1319.7px;top:579.8px" width="9" height="6"><path d="M0 0.5 L8 0.5 L4 5 Z" fill="#000"/></svg>
<div class="r" style="left:1256.3px;top:595.3px;width:75.4px;height:18.5px;background:#fff"></div>
<div id="t72" class="t" style="left:1260.9px;top:598.3px;font-size:13px;color:#d42020;font-weight:normal;transform:scaleX(1.1675);">off</div>
<svg class="r" style="left:1318.7px;top:603.5px" width="9" height="6"><path d="M0 0.5 L8 0.5 L4 5 Z" fill="#000"/></svg>
<div class="mb" style="left:1213.0px;top:569.4px;width:46.3px;height:21.6px;line-height:21.6px;border-radius:7px">More</div>
<div class="mb" style="left:1354.9px;top:569.4px;width:45.5px;height:21.6px;line-height:21.6px;border-radius:7px">More</div>
<div class="mb" style="left:1352.7px;top:594.0px;width:49.9px;height:20.7px;line-height:20.7px;border-radius:7px">Comp</div>
<div class="r" style="left:1127.8px;top:601.2px;width:118.0px;height:2.4px;background:#8a8a8a;border-radius:2px"></div>
<div class="r" style="left:1127.8px;top:627.4px;width:151.9px;height:2.4px;background:#8a8a8a;border-radius:2px"></div>
<div class="r" style="left:1160.8px;top:594.4px;width:16.0px;height:16.0px;background:#fff;border-radius:50%"></div>
<div class="r" style="left:1195.9px;top:620.6px;width:16.0px;height:16.0px;background:#fff;border-radius:50%"></div>
<div class="r" style="left:1059.0px;top:713.3px;width:344.5px;height:33.9px;background:#7c7c7c;border-radius:4px"></div>
<div class="r" style="left:1064.0px;top:735.8px;width:298.0px;height:5.2px;background:#000"></div>
<div class="r" style="left:1064.0px;top:735.8px;width:143.9px;height:5.2px;background:#10f010"></div>
<div class="r" style="left:1077.9px;top:730.2px;width:3.0px;height:15.4px;background:#fff"></div>
<div class="sm" style="left:1059.4px;top:716px">S1</div>
<div class="r" style="left:1106.9px;top:730.2px;width:3.0px;height:15.4px;background:#fff"></div>
<div class="sm" style="left:1088.4px;top:716px">S3</div>
<div class="r" style="left:1136.5px;top:730.2px;width:3.0px;height:15.4px;background:#fff"></div>
<div class="sm" style="left:1118.0px;top:716px">S5</div>
<div class="r" style="left:1165.7px;top:730.2px;width:3.0px;height:15.4px;background:#fff"></div>
<div class="sm" style="left:1147.2px;top:716px">S7</div>
<div class="r" style="left:1195.6px;top:730.2px;width:3.0px;height:15.4px;background:#fff"></div>
<div class="sm" style="left:1177.1px;top:716px">S9</div>
<div class="r" style="left:1219.6px;top:730.2px;width:3.0px;height:15.4px;background:#fff"></div>
<div class="sm" style="left:1201.1px;top:716px">+10</div>
<div class="r" style="left:1244.9px;top:730.2px;width:3.0px;height:15.4px;background:#fff"></div>
<div class="sm" style="left:1226.4px;top:716px">+20</div>
<div class="r" style="left:1293.5px;top:730.2px;width:3.0px;height:15.4px;background:#fff"></div>
<div class="sm" style="left:1275.0px;top:716px">+40</div>
<div class="r" style="left:1342.9px;top:730.2px;width:3.0px;height:15.4px;background:#fff"></div>
<div class="sm" style="left:1324.4px;top:716px">+60</div>
<div id="t73" class="t" style="left:1377.0px;top:715.5px;font-size:13px;color:#f0f0f0;font-weight:normal;transform:scaleX(1.1172);">-68</div>
<div id="t74" class="t" style="left:1369.6px;top:732.0px;font-size:13px;color:#f0f0f0;font-weight:normal;transform:scaleX(1.0623);">dBm</div></body></html>
